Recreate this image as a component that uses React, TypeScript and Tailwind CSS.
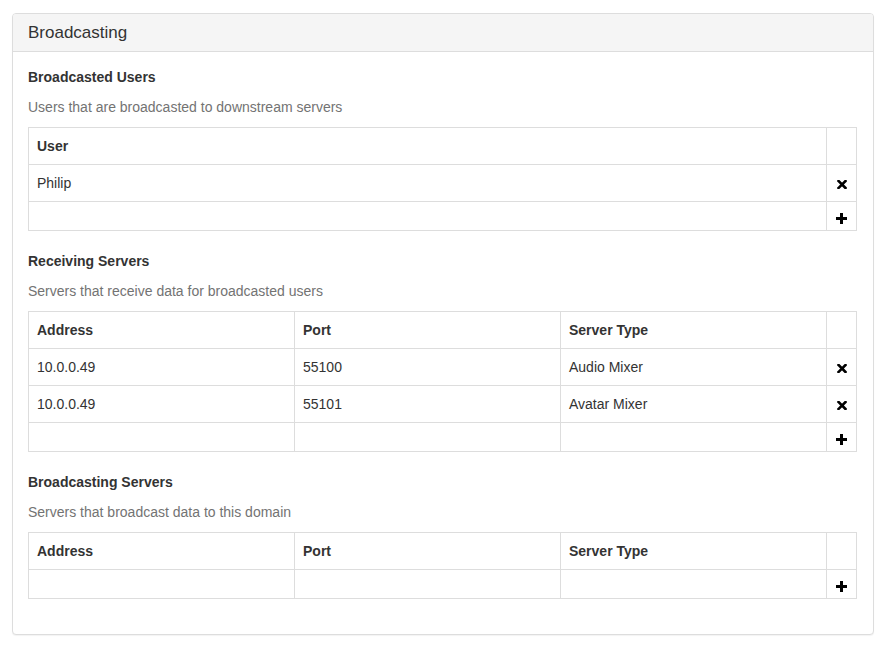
import React from "react";

const RemoveIcon = () => (
  <svg width="10" height="9" viewBox="0 0 10 9" className="inline-block">
    <path d="M1.5 1 L8.5 8 M8.5 1 L1.5 8" stroke="#000" strokeWidth="2.6" strokeLinecap="square" />
  </svg>
);

const PlusIcon = () => (
  <svg width="11" height="11" viewBox="0 0 11 11" className="inline-block">
    <path d="M4 0h3v4h4v3H7v4H4V7H0V4h4z" fill="#000" />
  </svg>
);

type Section = {
  title: string;
  desc: string;
  cols: string[];
  rows: string[][];
};

const sections: Section[] = [
  {
    title: "Broadcasted Users",
    desc: "Users that are broadcasted to downstream servers",
    cols: ["User"],
    rows: [["Philip"]],
  },
  {
    title: "Receiving Servers",
    desc: "Servers that receive data for broadcasted users",
    cols: ["Address", "Port", "Server Type"],
    rows: [
      ["10.0.0.49", "55100", "Audio Mixer"],
      ["10.0.0.49", "55101", "Avatar Mixer"],
    ],
  },
  {
    title: "Broadcasting Servers",
    desc: "Servers that broadcast data to this domain",
    cols: ["Address", "Port", "Server Type"],
    rows: [],
  },
];

const cell = "border border-[#dddddd] px-2 py-2 leading-5 align-top text-left";

export default function App() {
  return (
    <div
      className="bg-white min-h-[649px] pt-[13px] px-[12px] text-[14px] text-[#333333]"
      style={{ fontFamily: '"Liberation Sans", Arial, sans-serif' }}
    >
      <div className="w-[862px] border border-[#dddddd] rounded-[4px] shadow-[0_1px_1px_rgba(0,0,0,0.05)] bg-white">
        <div className="bg-[#f5f5f5] border-b border-[#dddddd] rounded-t-[3px] px-[15px] h-[38px] flex items-center">
          <h3 className="text-[17px] leading-[18px] font-normal text-[#333333]">Broadcasting</h3>
        </div>
        <div className="px-[15px] pt-[15px] pb-[15px]">
          {sections.map((s, i) => (
            <div key={i} className="mb-[20px]">
              <div className="font-bold leading-5">{s.title}</div>
              <div className="mt-[10px] mb-[10px] leading-5 text-[#737373]">{s.desc}</div>
              <table className="w-[829px] border-collapse table-fixed">
                <colgroup>
                  {s.cols.map((_, j) => (
                    <col key={j} />
                  ))}
                  <col className="w-[30px]" />
                </colgroup>
                <thead>
                  <tr>
                    {s.cols.map((c, j) => (
                      <th key={j} className={cell + " font-bold"}>
                        {c}
                      </th>
                    ))}
                    <th className={cell}></th>
                  </tr>
                </thead>
                <tbody>
                  {s.rows.map((r, ri) => (
                    <tr key={ri}>
                      {r.map((v, j) => (
                        <td key={j} className={cell}>
                          {v}
                        </td>
                      ))}
                      <td className="border border-[#dddddd] p-0 text-center align-middle">
                        <div className="pt-[1px] leading-none">
                          <RemoveIcon />
                        </div>
                      </td>
                    </tr>
                  ))}
                  <tr>
                    {s.cols.map((_, j) => (
                      <td key={j} className="border border-[#dddddd] h-[29px] p-0"></td>
                    ))}
                    <td className="border border-[#dddddd] h-[29px] p-0 text-center align-middle">
                      <div className="pt-[2px] leading-none">
                        <PlusIcon />
                      </div>
                    </td>
                  </tr>
                </tbody>
              </table>
            </div>
          ))}
        </div>
      </div>
    </div>
  );
}
